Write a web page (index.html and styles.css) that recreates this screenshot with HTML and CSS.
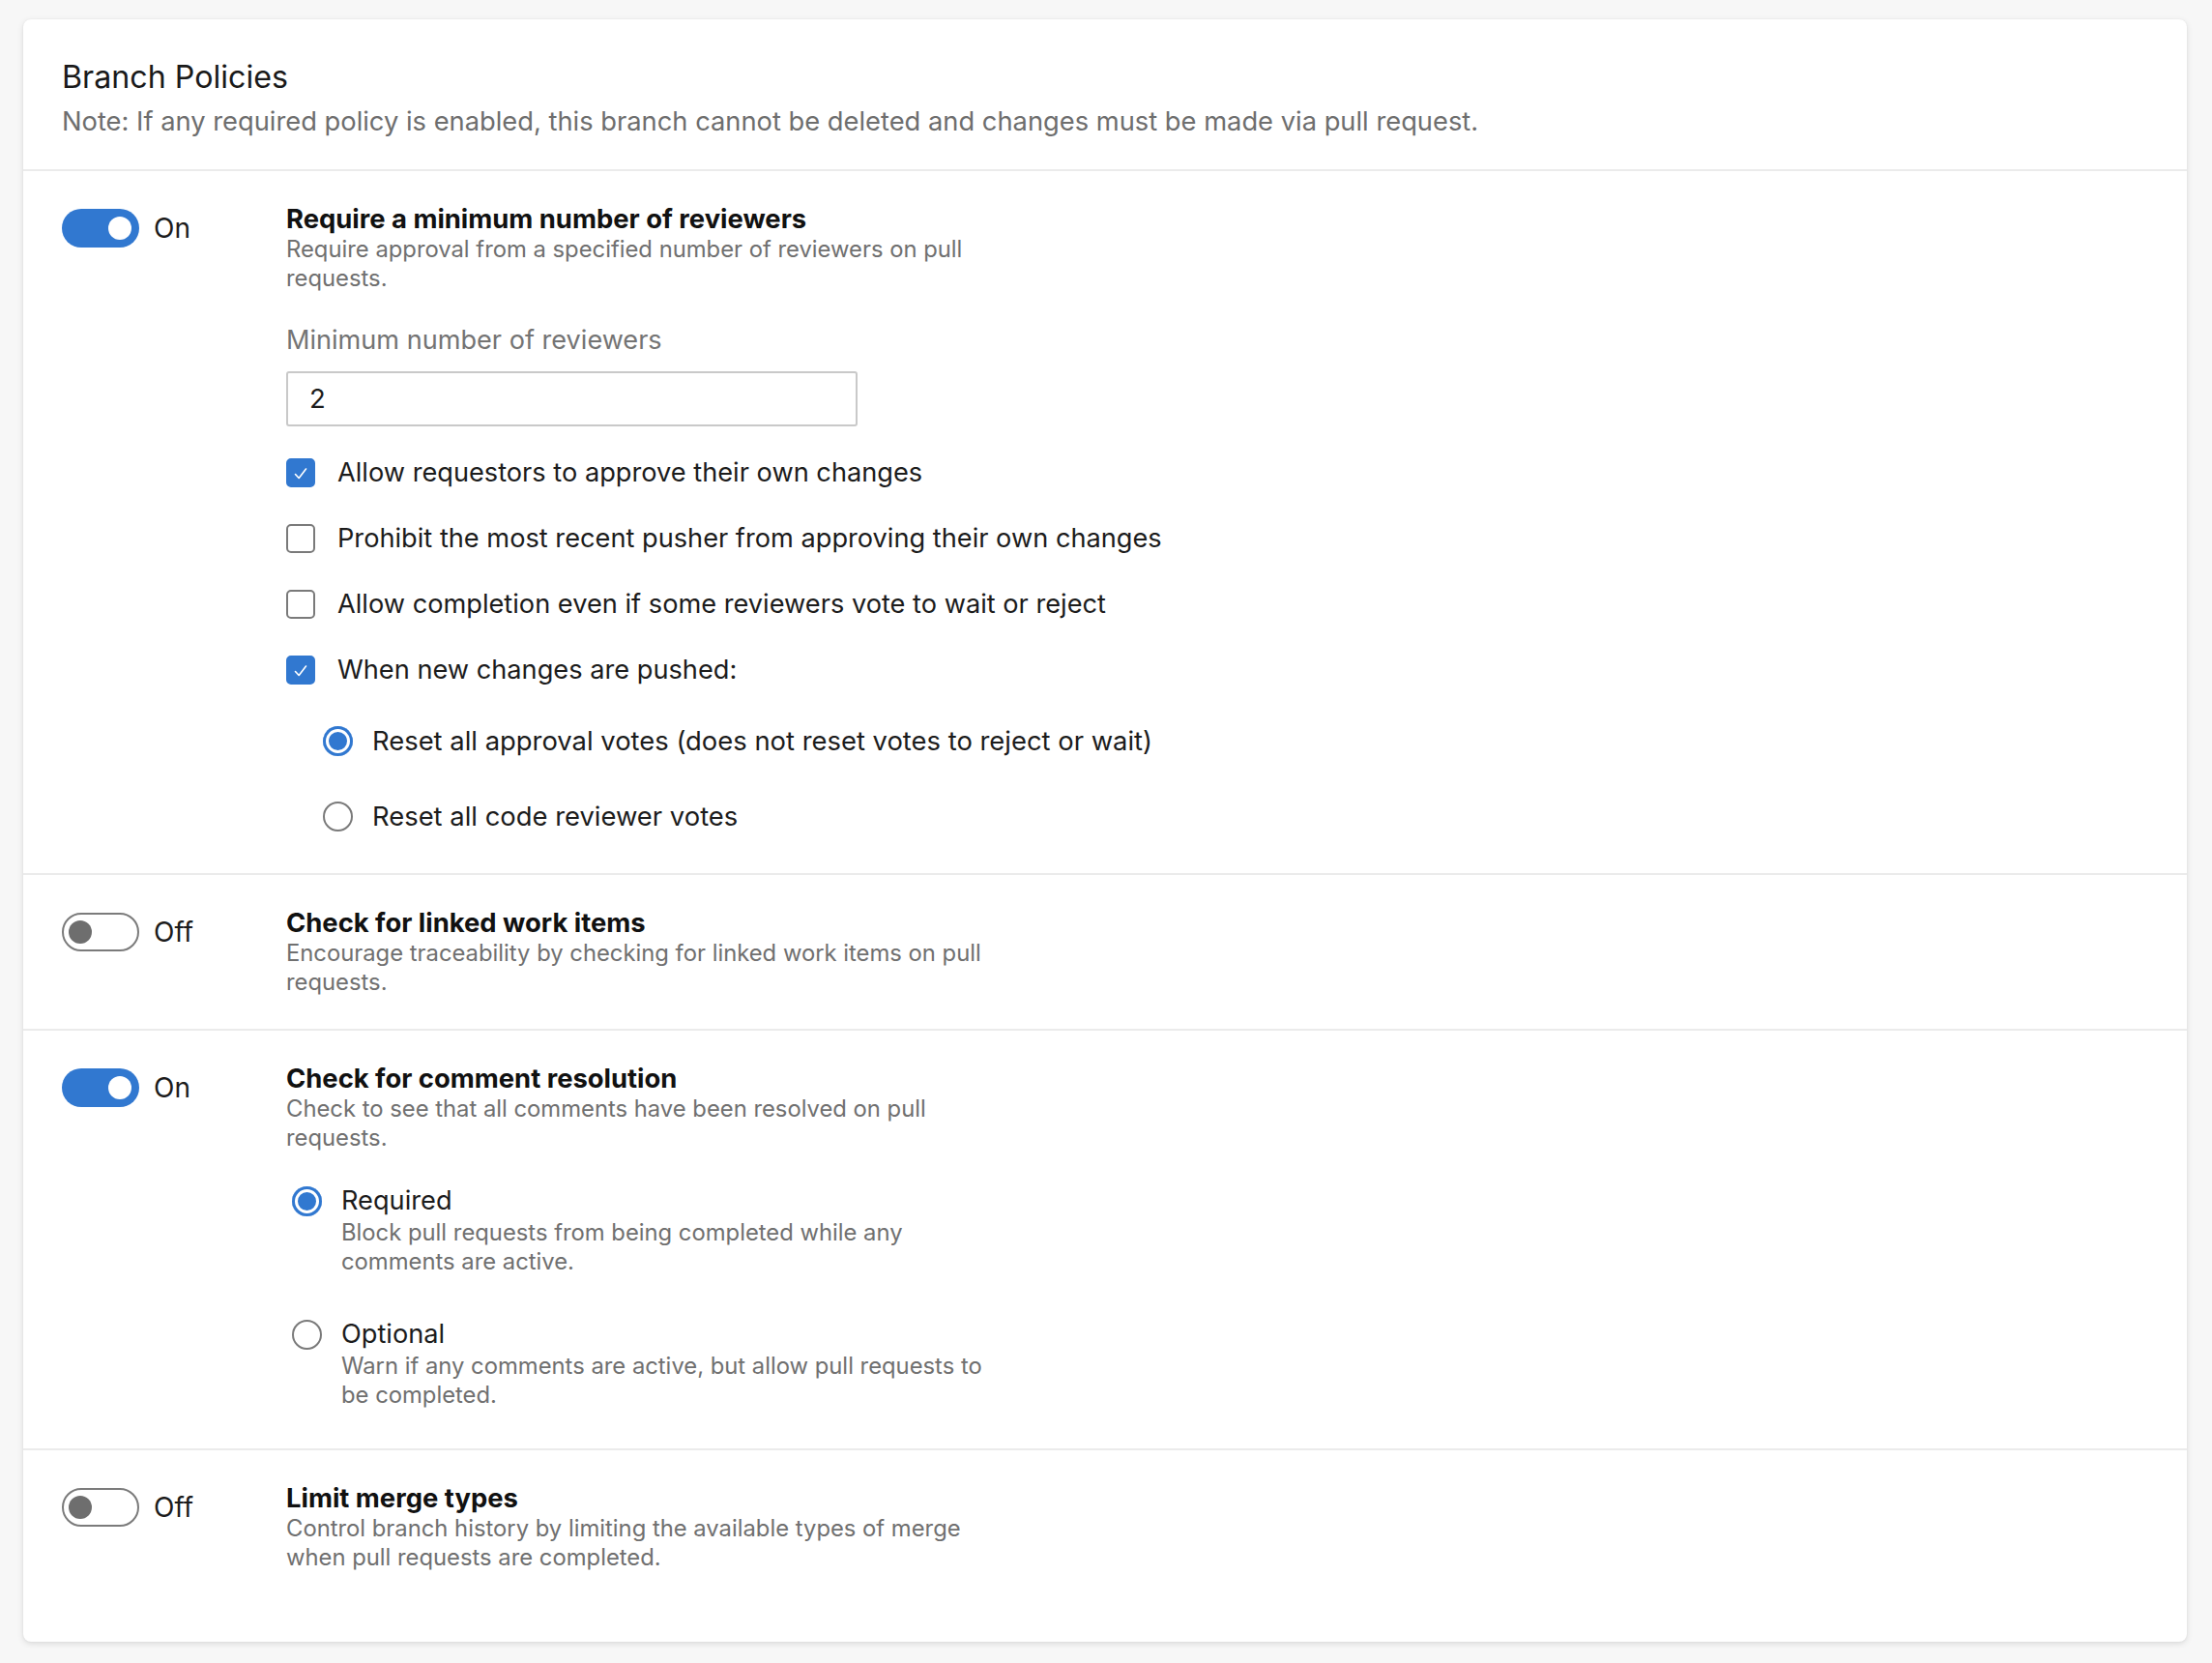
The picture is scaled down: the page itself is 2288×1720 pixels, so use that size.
FILE: index.html
```html
<!DOCTYPE html>
<html lang="en">
<head>
<meta charset="utf-8">
<title>Branch Policies</title>
<link rel="stylesheet" href="styles.css">
</head>
<body>
<div class="card">
  <header class="card-header">
    <h1 class="title">Branch Policies</h1>
    <p class="note">Note: If any required policy is enabled, this branch cannot be deleted and changes must be made via pull request.</p>
  </header>

  <section class="policy policy-1">
    <div class="switch-col">
      <span class="toggle on"><span class="knob"></span></span>
      <span class="toggle-label">On</span>
    </div>
    <div class="content">
      <h2 class="policy-title">Require a minimum number of reviewers</h2>
      <p class="desc">Require approval from a specified number of reviewers on pull requests.</p>
      <label class="field-label">Minimum number of reviewers</label>
      <div class="input">2</div>
      <div class="check-row first"><span class="checkbox checked"><svg viewBox="0 0 30 30" width="30" height="30"><path d="M9.5 16.5 L13.2 20.5 L20.5 11" fill="none" stroke="#fff" stroke-width="1.6" stroke-linecap="round" stroke-linejoin="round"/></svg></span><span class="row-label">Allow requestors to approve their own changes</span></div>
      <div class="check-row"><span class="checkbox"></span><span class="row-label">Prohibit the most recent pusher from approving their own changes</span></div>
      <div class="check-row"><span class="checkbox"></span><span class="row-label">Allow completion even if some reviewers vote to wait or reject</span></div>
      <div class="check-row"><span class="checkbox checked"><svg viewBox="0 0 30 30" width="30" height="30"><path d="M9.5 16.5 L13.2 20.5 L20.5 11" fill="none" stroke="#fff" stroke-width="1.6" stroke-linecap="round" stroke-linejoin="round"/></svg></span><span class="row-label">When new changes are pushed:</span></div>
      <div class="radio-row sub first"><span class="radio selected"></span><span class="row-label">Reset all approval votes (does not reset votes to reject or wait)</span></div>
      <div class="radio-row sub second"><span class="radio"></span><span class="row-label">Reset all code reviewer votes</span></div>
    </div>
  </section>

  <section class="policy policy-2">
    <div class="switch-col">
      <span class="toggle off"><span class="knob"></span></span>
      <span class="toggle-label">Off</span>
    </div>
    <div class="content">
      <h2 class="policy-title">Check for linked work items</h2>
      <p class="desc">Encourage traceability by checking for linked work items on pull requests.</p>
    </div>
  </section>

  <section class="policy policy-3">
    <div class="switch-col">
      <span class="toggle on"><span class="knob"></span></span>
      <span class="toggle-label">On</span>
    </div>
    <div class="content">
      <h2 class="policy-title">Check for comment resolution</h2>
      <p class="desc">Check to see that all comments have been resolved on pull requests.</p>
      <div class="option first">
        <span class="radio selected"></span>
        <div class="option-text">
          <div class="row-label">Required</div>
          <p class="desc option-desc">Block pull requests from being completed while any comments are active.</p>
        </div>
      </div>
      <div class="option second">
        <span class="radio"></span>
        <div class="option-text">
          <div class="row-label">Optional</div>
          <p class="desc option-desc">Warn if any comments are active, but allow pull requests to be completed.</p>
        </div>
      </div>
    </div>
  </section>

  <section class="policy policy-4">
    <div class="switch-col">
      <span class="toggle off"><span class="knob"></span></span>
      <span class="toggle-label">Off</span>
    </div>
    <div class="content">
      <h2 class="policy-title">Limit merge types</h2>
      <p class="desc">Control branch history by limiting the available types of merge when pull requests are completed.</p>
    </div>
  </section>
</div>
</body>
</html>
```

FILE: styles.css
```css
* { box-sizing: border-box; }

html, body {
  margin: 0;
  padding: 0;
  background: #f7f7f7;
}

body {
  font-family: Inter, "Noto Sans", "Liberation Sans", sans-serif;
  color: #1c1c1c;
  padding: 20px 26px 22px 24px;
}

.card {
  background: #fff;
  border-radius: 8px;
  box-shadow: 0 2px 6px rgba(0, 0, 0, 0.12), 0 0 2px rgba(0, 0, 0, 0.06);
  width: 2238px;
  height: 1678px;
  overflow: hidden;
}

.card-header {
  padding: 38px 40px 29px 40px;
  border-bottom: 2px solid #ebebeb;
}

.title {
  margin: 0;
  font-size: 32.2px;
  font-weight: 400;
  line-height: 44px;
  color: #1a1a1a;
}

.note {
  margin: 4px 0 0 0;
  font-size: 27.3px;
  line-height: 40px;
  color: #6e6e6e;
}

.policy {
  display: flex;
  padding: 32px 40px 33px 40px;
  border-bottom: 2px solid #ebebeb;
}

.policy-1 { padding-bottom: 39px; }
.policy-3 { padding-bottom: 40px; }
.policy-4 { border-bottom: none; padding-bottom: 70px; }

.switch-col {
  width: 232px;
  flex: none;
  display: flex;
  align-items: center;
  align-self: flex-start;
  margin-top: 7px;
  gap: 15px;
}

.toggle {
  width: 80px;
  height: 40px;
  border-radius: 20px;
  display: flex;
  align-items: center;
  flex: none;
}

.toggle.on {
  background: #3178d0;
  justify-content: flex-end;
  padding-right: 8px;
}

.toggle.off {
  background: #fff;
  border: 2px solid #7b7b7b;
  justify-content: flex-start;
  padding-left: 5px;
}

.knob {
  width: 24px;
  height: 24px;
  border-radius: 50%;
}

.toggle.on .knob { background: #fff; }
.toggle.off .knob { background: #6e6e6e; }

.toggle-label {
  font-size: 28px;
  line-height: 40px;
  color: #1c1c1c;
}

.content {
  flex: 1;
  min-width: 0;
}

.policy-title {
  margin: 0;
  font-size: 27.4px;
  font-weight: 700;
  line-height: 34px;
  color: #111;
}

.desc {
  margin: 0;
  font-size: 23.8px;
  line-height: 30px;
  color: #707070;
  max-width: 735px;
}

.field-label {
  display: block;
  margin-top: 31px;
  font-size: 27.1px;
  line-height: 36px;
  color: #747474;
}

.input {
  margin-top: 14px;
  width: 591px;
  height: 57px;
  border: 2px solid #c9c9c9;
  border-radius: 3px;
  padding: 0 0 0 22px;
  font-size: 27.5px;
  line-height: 53px;
  color: #1c1c1c;
}

.check-row,
.radio-row {
  display: flex;
  align-items: center;
  height: 40px;
  margin-top: 28px;
}

.radio-row.sub { padding-left: 38px; }
.radio-row.first { margin-top: 33px; }
.radio-row.second { margin-top: 38px; }

.row-label {
  font-size: 27.2px;
  line-height: 36px;
  color: #1c1c1c;
  white-space: nowrap;
}

.radio-row .row-label {
  font-size: 27.4px;
}

.checkbox {
  width: 30px;
  height: 30px;
  flex: none;
  border-radius: 5px;
  border: 2px solid #7a7a7a;
  margin-right: 23px;
  display: flex;
}

.checkbox.checked {
  background: #3178d0;
  border-color: #3178d0;
}

.checkbox.checked svg {
  margin: -2px;
  display: block;
}

.radio {
  width: 31px;
  height: 31px;
  flex: none;
  border-radius: 50%;
  border: 2px solid #7a7a7a;
  background: #fff;
  margin-right: 20px;
}

.radio.selected {
  border: none;
  background: #3178d0;
  box-shadow: inset 0 0 0 3px #3178d0, inset 0 0 0 6px #fff;
}

.option {
  display: flex;
  align-items: flex-start;
  padding-left: 6px;
}

.option .radio {
  margin-top: 3px;
}

.option.first { margin-top: 32px; }
.option.second { margin-top: 42px; }

.option-desc {
  max-width: 690px;
}
```
